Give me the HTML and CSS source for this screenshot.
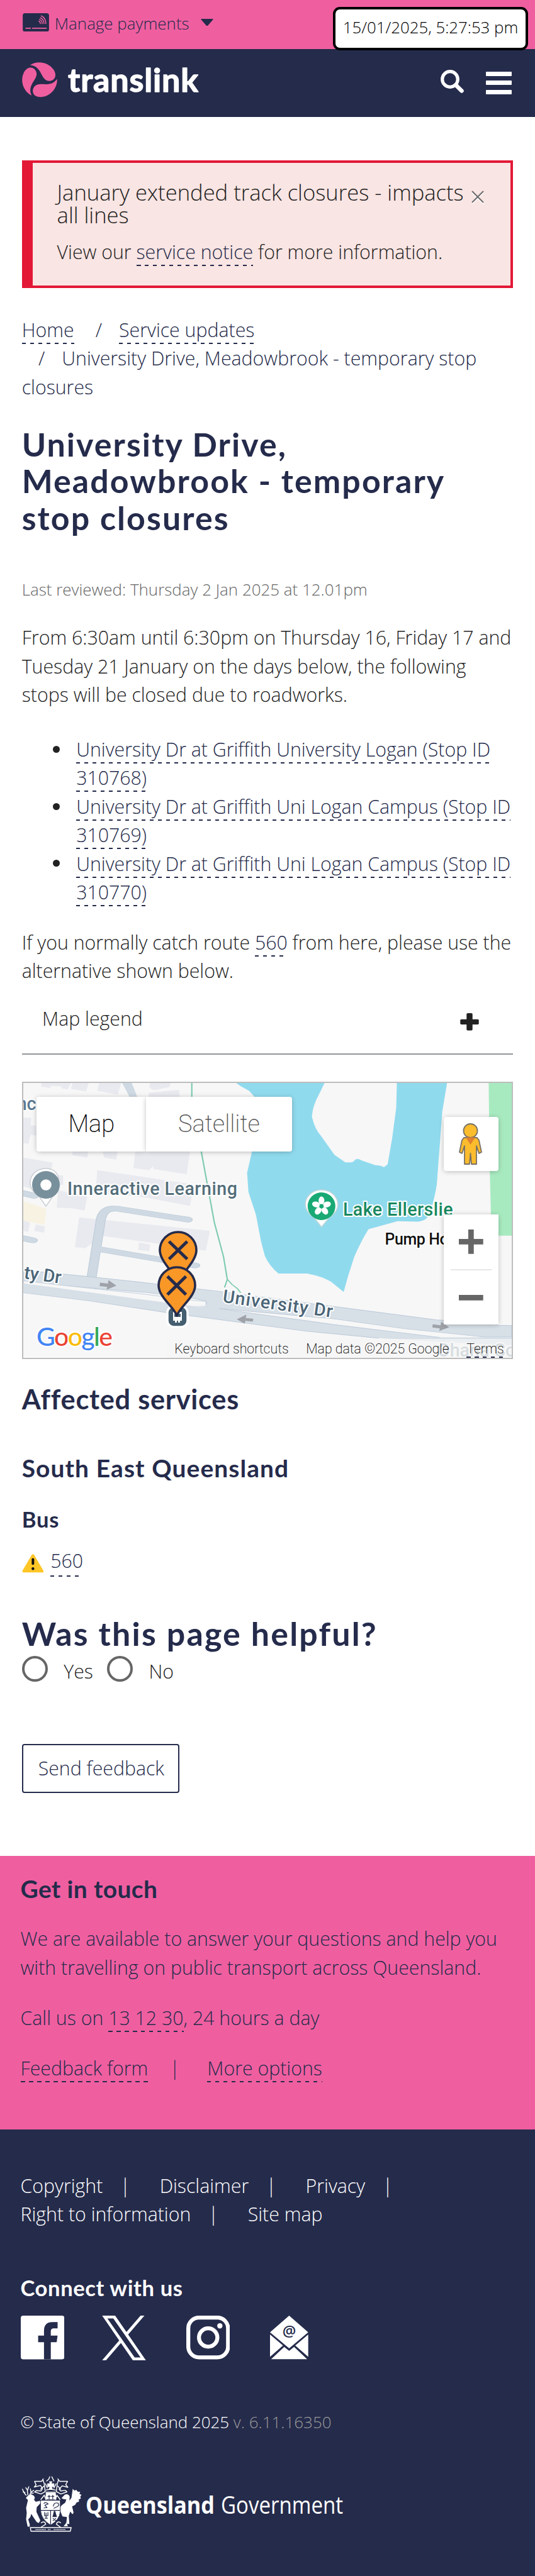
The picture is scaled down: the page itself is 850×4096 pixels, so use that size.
FILE: index.html
```html
<!DOCTYPE html>
<html lang="en">
<head>
<meta charset="utf-8">
<title>University Drive, Meadowbrook - temporary stop closures | Translink</title>
<link rel="stylesheet" href="styles.css">
</head>
<body>
<div class="topbar">
  <svg class="card-icon" viewBox="0 0 174 122"><rect width="174" height="122" rx="15" fill="#252b4b"/><g fill="none" stroke="#ef5fa0" stroke-width="6.5" stroke-linecap="round"><path d="M21 99.500H51M64 99.500H156"/><path d="M122 18Q153 31 153 69M117 30Q141 41 141 69M111 41Q129 49 129 69M107 52Q116 56 117 69"/></g></svg>
  <span class="topbar-label">Manage payments</span>
  <svg class="caret" viewBox="0 0 20 12"><path d="M0 0H20V1L10.500 12H9.500L0 1Z" fill="#252b4b"/></svg>
</div>
<div class="timestamp">15/01/2025, 5:27:53 pm</div>
<header class="header">
  <svg class="logo" viewBox="0 0 290 57">
    <g transform="translate(-12.980 -84.110) scale(.2403)" fill="#ef5fa0">
      <path d="M107 369C150 338 225 345 262 398C290 440 268 473 235 474C175 474 190 375 107 369Z"/>
      <path d="M107 369C150 338 225 345 262 398C290 440 268 473 235 474C175 474 190 375 107 369Z" transform="rotate(120 170 466)"/>
      <path d="M107 369C150 338 225 345 262 398C290 440 268 473 235 474C175 474 190 375 107 369Z" transform="rotate(240 170 466)"/>
    </g>
    <text class="wordmark" x="73" y="47.300" textLength="207">translink</text>
  </svg>
  <div class="header-actions">
    <svg class="search-icon" viewBox="0 0 37 37" fill="none" stroke="#fff" stroke-linecap="round"><circle cx="15" cy="15" r="12.300" stroke-width="5.200"/><path d="M25 25L33.500 33.500" stroke-width="6.500"/></svg>
    <div class="burger"><i></i><i></i><i></i></div>
  </div>
</header>
<main class="main">
  <section class="alert">
    <h2>January extended track closures - impacts all lines</h2>
    <p>View our <a>service notice</a> for more information.</p>
    <svg class="alert-close" viewBox="0 0 20 22" fill="none"><path d="M1 3L19 21M19 3L1 21" stroke="#fff" stroke-width="2"/><path d="M1 1L19 19M19 1L1 19" stroke="#6d6a6c" stroke-width="2"/></svg>
  </section>
  <ol class="crumbs">
    <li><a>Home</a></li>
    <li><a>Service updates</a></li>
    <li>University Drive, Meadowbrook - temporary stop closures</li>
  </ol>
  <h1>University Drive, Meadowbrook - temporary stop closures</h1>
  <p class="reviewed">Last reviewed: Thursday 2 Jan 2025 at 12.01pm</p>
  <p class="intro">From 6:30am until 6:30pm on Thursday 16, Friday 17 and Tuesday 21 January on the days below, the following stops will be closed due to roadworks.</p>
  <ul class="stops">
    <li><a>University Dr at Griffith University Logan (Stop ID 310768)</a></li>
    <li><a>University Dr at Griffith Uni Logan Campus (Stop ID 310769)</a></li>
    <li><a>University Dr at Griffith Uni Logan Campus (Stop ID 310770)</a></li>
  </ul>
  <p class="routes">If you normally catch route <a>560</a> from here, please use the alternative shown below.</p>
  <div class="legend"><span>Map legend</span><svg viewBox="0 0 30 28" fill="#222"><rect x="10.200" width="9.600" height="28" rx="1.800"/><rect y="9.800" width="30" height="8.600" rx="1.800"/></svg></div>
  <div class="map">
    <svg class="map-canvas" viewBox="0 0 776 436">
      <rect width="776" height="436" fill="#f7f7f7"/>
      <g transform="translate(-36.900 -20.900) scale(.5421 .3035)">
        <g fill="#e9eaf0">
          <path d="M122 69H208L198 103L180 98V88L150 84L148 94L120 88ZM212 69H260L252 113L208 100ZM290 69H355L345 130L285 110ZM440 69H500L497 90L450 107L437 92ZM436 120L525 105L527 160H433Z"/>
          <path d="M68 250L92 252L90 290L106 294V345L90 340L83 388L68 384ZM68 460L154 486L148 545L185 555V600L120 640L68 610ZM213 425L258 428L256 460L211 446ZM300 425L345 428L340 470L305 460ZM396 425H557L547 547L450 520L448 505L437 525L391 515Z"/>
          <path d="M285 525L566 600L557 713L430 670L280 640ZM170 630L255 665L248 738L210 725L166 722ZM232 773L615 843L603 948L535 930L440 905L300 870L250 935L219 930ZM68 785L88 800L82 850L68 843ZM105 810L132 820L129 853L100 845ZM407 905L440 915L437 950L405 944Z"/>
        </g>
        <path d="M68 690L136 728L130 812L68 790Z" fill="#f8f2e2"/>
        <path d="M358 69H386L404 150H382Z" fill="#ced9e3"/>
        <g fill="none" stroke-linecap="round">
          <path d="M268 1090L294 800C297 740 315 722 345 728L550 785M292 940L572 1025M40 872L96 893M40 635L100 660" stroke="#bccad8" stroke-width="29"/>
          <path d="M268 1090L294 800C297 740 315 722 345 728L550 785M292 940L572 1025M40 872L96 893M40 635L100 660" stroke="#ced9e3" stroke-width="25"/>
        </g>
        <path d="M68 1050L253 1082L400 1110L640 1160L980 1240L1280 1310L1440 1325L1460 1338L1500 1340V1400H1420L1180 1355L980 1305L640 1250L560 1230L590 1238L604 1238L606 1212L560 1195L420 1165L180 1130L68 1118Z" fill="#d7dfe7" stroke="#bccad8" stroke-width="3"/>
        <path d="M68 1105L180 1128L420 1175L570 1208L604 1213V1239L560 1238L420 1208L68 1130Z" fill="#f7f7f7" stroke="#c4d0dc" stroke-width="3"/>
        <path d="M68 1118L560 1238L645 1252L980 1335L1290 1402H1500V1446L1110 1406L900 1370L500 1275L260 1210L68 1168Z" fill="#d7dfe7"/>
        <path d="M68 1168L260 1210L500 1275L900 1370L1110 1406M645 1252L980 1335L1290 1402" fill="none" stroke="#bccad8" stroke-width="3"/>
        <path d="M600 1170H660L640 1255H590L606 1225Z" fill="#d7dfe7"/>
        <path d="M562 69V180L592 450L628 800L655 980L666 1098L658 1140M666 1098L680 1125L695 1145L705 1168" fill="none" stroke="#7ecbb0" stroke-width="4"/>
        <path d="M692 69H1310L1296 220L1280 600Q1275 660 1262 740Q1255 790 1225 795L1165 793L1080 835Q1060 890 1038 980L1020 1080L1007 1164L970 1110Q940 1080 900 1067H816Q790 1030 776 975L765 900L750 760L728 640L724 540L738 430L760 260L745 140L730 110L705 85Z" fill="#90daee"/>
        <path d="M951 69H1163L1161 200L1149 360L1136 495L1125 510Q1115 500 1100 500L1060 475Q1048 460 1040 472Q1035 487 1025 485H1012L980 445L940 345Q922 310 914 245Q916 190 933 135Z" fill="#f7f7f7"/>
        <path d="M1432 69H1500V869H1440L1435 500Z" fill="#a8eac0"/>
        <g fill="#9fa2a9"><path d="M293 1115L316 1120L318 1102L341 1131L312 1152L314 1137L292 1133ZM742 1304L720 1300L722 1282L694 1307L717 1330L719 1315L741 1319ZM1268 1333L1291 1338L1293 1320L1316 1349L1287 1368L1289 1355L1267 1350Z"/></g>
      </g>
      <g class="poi-pins">
        <path d="M36 196L25 180C0 165 11 136 36 136S61 165 47 180Z" fill="#fff" stroke="#c9ced4" stroke-width="1.500"/>
        <circle cx="36" cy="162" r="22" fill="#78909c"/><circle cx="36" cy="162" r="8.800" fill="#fff"/>
        <path d="M473.800 229L462 214C437 199 449 170 473.800 170S511 199 486 214Z" fill="#fff" stroke="#c2d5d8" stroke-width="1.500"/>
        <circle cx="473.800" cy="196" r="22" fill="#18a974"/>
        <g fill="#fff"><ellipse cx="473.800" cy="187" rx="4.600" ry="6.500"/><ellipse cx="473.800" cy="187" rx="4.600" ry="6.500" transform="rotate(72 473.800 196)"/><ellipse cx="473.800" cy="187" rx="4.600" ry="6.500" transform="rotate(144 473.800 196)"/><ellipse cx="473.800" cy="187" rx="4.600" ry="6.500" transform="rotate(216 473.800 196)"/><ellipse cx="473.800" cy="187" rx="4.600" ry="6.500" transform="rotate(288 473.800 196)"/></g>
        <circle cx="473.800" cy="196" r="3.400" fill="#18a974"/>
      </g>
      <g class="map-label">
        <text x="69.900" y="177.900" textLength="270" fill="#546e7a">Inneractive Learning</text>
        <text x="507.900" y="211.300" textLength="174.600" fill="#188860">Lake Ellerslie</text>
        <text class="minor" x="574.600" y="256.500" textLength="101" fill="#111">Pump Ho</text>
        <text transform="translate(316 348.500) rotate(8)" textLength="176" fill="#4b6577">University Dr</text>
        <text transform="translate(59 319) rotate(8)" text-anchor="end" fill="#4b6577">ty Dr</text>
        <text x="20.500" y="42.800" text-anchor="end" fill="#5b7893">nc</text>
        <text x="658" y="435" fill="#8fa3ae">Ohana Co</text>
      </g>
      <g>
        <rect x="229" y="355" width="32" height="33" rx="10" fill="#455f70" stroke="#fff" stroke-width="3.500"/>
        <path d="M238 364H252V378H249V381H246V378H244V381H241V378H238Z" fill="#fff"/><path d="M240 367H250V372H240Z" fill="#455f70"/>
        <g fill="#f99727" stroke="#252b4b" stroke-width="3.600" stroke-linejoin="round">
          <path d="M246 318C242 304 217 284 217 266A29 29 0 0 1 275 266C275 284 250 304 246 318Z"/><path d="M231.500 252L260.500 280M260.500 252L231.500 280" stroke-width="5"/>
          <path d="M244 370C240 357 215 340 215 322A29 29 0 0 1 273 322C273 340 248 357 244 370Z"/><path d="M229 307.500L258.500 336.500M258.500 307.500L229 336.500" stroke-width="5"/>
        </g>
      </g>
      <text class="google" x="21" y="417.500" textLength="121"><tspan fill="#4285f4">G</tspan><tspan fill="#ea4335">o</tspan><tspan fill="#fbbc05">o</tspan><tspan fill="#4285f4">g</tspan><tspan fill="#34a853">l</tspan><tspan fill="#ea4335">e</tspan></text>
    </svg>
    <div class="map-type"><span class="active">Map</span><span>Satellite</span></div>
    <div class="pegman"><svg viewBox="0 0 37 66"><g fill="#fbbc2d" stroke="#777065" stroke-width="1.800" stroke-linejoin="round"><path d="M8 23H29L32 27L36 46L32 48L28 36V65H20L18.500 48L17 65H9V36L5 48L1 46L5 27Z"/><circle cx="18.500" cy="12" r="11"/></g><path d="M11 22.500H26L18.500 34Z" fill="#e08030"/></svg></div>
    <div class="zoomer"><svg viewBox="0 0 38 38"><path d="M0 14.700H14.700V0H23.300V14.700H38V23.300H23.300V38H14.700V23.300H0Z" fill="#666"/></svg><hr><svg viewBox="0 0 38 38"><path d="M0 14.700H38V23.300H0Z" fill="#666"/></svg></div>
    <div class="attribution"><span>Keyboard shortcuts</span><span>Map data ©2025 Google</span><a>Terms</a></div>
  </div>
  <h3 class="affected">Affected services</h3>
  <h4 class="region">South East Queensland</h4>
  <h5 class="mode">Bus</h5>
  <p class="service"><svg viewBox="0 0 35 30"><path d="M15.500 1.500Q17.500 -1 19.500 1.500L34.500 27Q35 29.500 33 29.500H2Q0 29.500 .5 27Z" fill="#ffc627"/><path d="M17.500 8.500V15.500" stroke="#111" stroke-width="4" stroke-linecap="round"/><circle cx="17.500" cy="23.500" r="2.200" fill="#111"/></svg><a>560</a></p>
  <h2 class="helpful">Was this page helpful?</h2>
  <div class="choices"><label><i></i><span>Yes</span></label><label><i></i><span>No</span></label></div>
  <button class="send">Send feedback</button>
</main>
<section class="contact">
  <h4>Get in touch</h4>
  <p>We are available to answer your questions and help you with travelling on public transport across Queensland.</p>
  <p>Call us on <a>13 12 30</a>, 24 hours a day</p>
  <p class="contact-links"><a>Feedback form</a><span>|</span><a>More options</a></p>
</section>
<footer class="footer">
  <div class="footer-links"><span>Copyright</span><span>Disclaimer</span><span>Privacy</span><span>Right to information</span><span>Site map</span></div>
  <h5>Connect with us</h5>
  <div class="social">
    <svg class="fb" viewBox="0 0 69.500 69.500"><rect width="69.500" height="69.500" rx="4" fill="#fff"/><path d="M36.900 69.500V42.300H27.600V31.700H36.900V24C36.900 14.500 42 10.300 50 10.300H58.500V20.200H53C49 20.200 47.700 22 47.700 25V31.700H58.500L57 42.300H47.700V69.500Z" fill="#252b4b"/></svg>
    <svg class="x" viewBox="0 0 1200 1227"><path d="M714.163 519.284L1160.890 0H1055.030L667.137 450.887L357.328 0H0L468.492 681.821L0 1226.370H105.866L515.491 750.218L842.672 1226.370H1200L714.137 519.284ZM569.165 687.828L521.697 619.934L144.011 79.694H306.615L611.412 515.685L658.880 583.579L1055.080 1150.300H892.476L569.165 687.854Z" fill="#fff"/></svg>
    <svg class="ig" viewBox="0 0 69.500 69.500" fill="none" stroke="#fff" stroke-width="6.300"><rect x="3.150" y="3.150" width="63.200" height="63.200" rx="17"/><circle cx="34.750" cy="34.750" r="14.600"/><circle cx="53.300" cy="16.200" r="4.200" fill="#fff" stroke="none"/></svg>
    <svg class="mail" viewBox="0 0 60.700 69.500" fill="#fff"><path d="M30.400 0L60.700 26.400L30.400 52L0 26.400ZM0 30L20.600 47.600L0 65.600ZM60.700 30L40.100 47.600L60.700 65.600ZM1.800 69.300L22.500 49.800L30.400 55.900L38.300 49.800L59 69.300Z"/><text x="30.400" y="33" text-anchor="middle">@</text></svg>
  </div>
  <p class="copyright">© State of Queensland 2025 <span>v. 6.11.16350</span></p>
  <svg class="gov" viewBox="0 0 520 89">
    <g transform="translate(-6 -7.900) scale(.2403)" stroke-linejoin="round" stroke-linecap="round">
      <g fill="none" stroke="#fff" stroke-width="6">
        <path d="M52 160L40 146L28 120M44 142L32 138M64 158L60 130L70 104M62 128L50 110M76 158L84 140L102 128M84 140L80 118M82 146L100 146"/>
        <path d="M165 52L155 68L108 68L118 92L106 106L148 96L160 118L150 132L118 130L108 138L150 152L178 136L172 84L164 60M262 52L274 68L326 68L314 90L328 108L290 98L270 120L280 132L312 128L322 138L282 152L252 136L258 84L266 60"/>
        <path d="M188 66L202 54L208 38M236 66L230 54L222 38M180 84L192 112M250 84L236 112M150 188L172 160L184 190M276 188L256 160L244 190M148 120L170 100M280 120L262 100"/>
        <path d="M184 140H246M184 126Q214 116 246 126"/>
        <path d="M84 374H346M80 374L84 398H344L350 374M150 372L182 352Q176 328 152 342M280 372L252 352Q258 328 280 342"/>
        <path d="M116 387H180M198 387H218M236 387H314" stroke-width="5" stroke-dasharray="4 6"/>
      </g>
      <g fill="#fff">
        <path d="M204 68H226L220 82H238V106H222L228 120H202L208 106H192V82H208Z"/>
        <path d="M182 144H248L252 188H180Z"/>
        <path d="M50 178L66 162L84 152L104 164L110 178L104 190L116 204L146 196L152 208L134 226L122 240L120 270L146 326L136 344L122 338L98 302L86 284L80 304L66 320L76 352V368H62L52 320L56 276L52 244L64 192Z"/>
        <path d="M360 118L372 130L384 124L392 136L410 138L404 150L418 158L410 170L414 182L400 188L402 202L386 208L376 224L356 234L366 276L358 286L344 268L334 296L338 350H322L328 366H300L318 342L322 304L292 300L278 264L276 240L290 224L310 210L318 188L300 186L286 180L306 158Q328 146 340 168L338 196L352 176Z"/>
        <path d="M148 194H278V264Q276 322 214 358Q152 322 148 264Z" stroke="#252b4b" stroke-width="4"/>
      </g>
      <g fill="none" stroke="#252b4b" stroke-width="5">
        <path d="M150 260H276M214 260V354M204 160V184M196 168H212M228 160V184M220 168H236"/><path d="M170 214Q182 202 198 218L176 226L190 242L170 244M232 232Q236 206 262 212Q276 224 258 236L236 246M184 278V310M174 274V296H196V274M176 312H194M230 314L248 328M248 314L230 328"/>
      </g>
      <path d="M236 264H244L256 304H226Z" fill="#252b4b"/>
    </g>
    <text class="gov-b" x="101" y="60" textLength="205" lengthAdjust="spacingAndGlyphs">Queensland</text>
    <text class="gov-r" x="316" y="60" textLength="194" lengthAdjust="spacingAndGlyphs">Government</text>
  </svg>
</footer>
</body>
</html>
```
FILE: styles.css
```css
* { box-sizing: border-box; }
body { margin: 0; width: 850px; background: #fff; color: #222; font: 300 30.28px/45.42px "Open Sans", sans-serif; }
h1, h2, h3, h4, h5, p, ul, ol { margin: 0; padding: 0; }
svg { display: block; flex: none; }
h1, h3, h4, h5, .helpful { font-family: Lato, sans-serif; font-weight: 700; color: #252b4b; }
a {
  color: #252b4b; padding-bottom: 2px;
  background: repeating-linear-gradient(90deg, #252b4b 0 6.500px, transparent 6.500px 13px) left bottom / 100% 2px no-repeat;
  -webkit-box-decoration-break: clone; box-decoration-break: clone;
}

.topbar { height: 78px; padding: 17.700px 34.700px 0; display: flex; align-items: flex-start; background: #ef5fa0; color: #252b4b; font-size: 25.950px; line-height: 38.900px; }
.card-icon { width: 42px; height: 29.300px; margin: 3.300px 9px 0 1px; }
.caret { width: 20px; height: 11.500px; margin: 12px 0 0 18px; }
.timestamp { position: absolute; left: 529px; top: 11px; width: 310px; height: 69px; padding-top: 9px; border: 4.300px solid #000; border-radius: 11px; background: #fff; color: #000; font-size: 25.800px; line-height: 38.900px; text-align: center; white-space: nowrap; }
.header { height: 108.300px; padding: 20.600px 36.700px 0 34.700px; display: flex; justify-content: space-between; background: #252b4b; }
.logo { width: 290px; height: 57px; overflow: visible; }
.wordmark { font: 700 52px Lato, sans-serif; fill: #fff; stroke: #fff; stroke-width: 1.300px; stroke-linejoin: round; }
.header-actions { display: flex; gap: 35px; padding-top: 12.300px; }
.search-icon { width: 37px; height: 37px; }
.burger { width: 41.500px; display: flex; flex-direction: column; gap: 7.800px; padding-top: 2.700px; }
.burger i { height: 7px; border-radius: 1px; background: #fff; }

.main { padding: 69px 34.700px 99.300px; }
.alert { position: relative; height: 203px; padding: 28.500px 60px 0 38.900px; border: 4.330px solid #e31836; border-left-width: 17.300px; background: #f9e5e3; }
.alert h2 { font-size: 34.600px; line-height: 36.500px; font-weight: 300; margin-bottom: 17.400px; }
.alert-close { position: absolute; left: 697px; top: 43.500px; width: 20px; height: 22px; }
.crumbs { margin-top: 43.500px; list-style: none; color: #252b4b; }
.crumbs li { display: inline-block; }
.crumbs li + li::before { content: "/"; margin: 0 27px 0 26.300px; }
h1 { margin-top: 38.600px; font-size: 51.900px; line-height: 58.600px; letter-spacing: 2.100px; }
.reviewed { margin-top: 65.400px; font-size: 25.950px; line-height: 38.900px; color: #666; }
.intro { margin-top: 34.400px; }
.stops { margin: 41.600px 0 34.500px; padding-left: 86.500px; list-style: none; }
.stops li { position: relative; }
.stops li::before { content: ""; position: absolute; left: -37px; top: 16.700px; width: 11px; height: 11px; border-radius: 50%; background: #222; }
.legend { margin-top: 30px; height: 80.200px; padding: 0 54.500px 0 32.400px; display: flex; justify-content: space-between; border-bottom: 2.160px solid #939598; }
.legend svg { width: 30px; height: 27.500px; margin-top: 14.500px; }

.map { position: relative; margin-top: 43.400px; height: 440.400px; border: 2.160px solid #bdbdbd; overflow: hidden; }
.map-canvas { width: 776px; height: 436px; }
.map-label { font: 500 28.600px Roboto, sans-serif; stroke: #fff; stroke-width: 4px; stroke-linejoin: round; paint-order: stroke; }
.map-label .minor { font-size: 25px; }
.google { font: 500 41px Lato, sans-serif; stroke: #fff; stroke-width: 4px; paint-order: stroke; }
.map-type { position: absolute; left: 21.600px; top: 21.600px; display: flex; height: 86.500px; font: 200 38px/86px Roboto, sans-serif; color: #565656; text-align: center; }
.map-type span { width: 231.400px; background: #fff; border-radius: 0 4px 4px 0; box-shadow: 0 1px 8px -1px rgba(0,0,0,.3); }
.map-type .active { width: 174px; color: #000; border-radius: 4px 0 0 4px; }
.pegman, .zoomer { position: absolute; left: 668.400px; width: 86.500px; background: #fff; border-radius: 4px; box-shadow: 0 1px 8px -1px rgba(0,0,0,.3); }
.pegman { top: 53.500px; height: 86.500px; padding: 10.500px 24px; }
.pegman svg { width: 37px; height: 66px; }
.zoomer { top: 209px; height: 175px; padding: 24px 0; border-radius: 0; display: flex; flex-direction: column; align-items: center; justify-content: space-between; }
.zoomer svg { width: 38.700px; height: 38.700px; }
.zoomer hr { width: 65px; height: 2px; margin: 0; border: 0; background: #e6e6e6; }
.attribution { position: absolute; right: 0; bottom: 0; width: 549px; height: 30px; padding-left: 13px; display: flex; gap: 27.700px; background: rgba(245,245,245,.7); font: 200 21.300px/32px Roboto, sans-serif; color: #000; white-space: nowrap; }
.attribution a { color: #000; height: 30px; }

.affected { margin-top: 37.200px; font-size: 43.300px; line-height: 52px; letter-spacing: .75px; }
.region { margin-top: 60.600px; font-size: 38.900px; line-height: 46px; letter-spacing: 1.100px; }
.mode { margin-top: 38px; font-size: 34.600px; line-height: 42px; letter-spacing: .8px; }
.service { margin-top: 22.800px; display: flex; gap: 10.800px; }
.service svg { width: 34.700px; height: 29.700px; margin-top: 11.500px; }
.helpful { margin-top: 60.700px; font-size: 51.900px; line-height: 58.600px; letter-spacing: 2.200px; }
.choices { margin-top: 6.800px; display: flex; gap: 22px; }
.choices label { display: flex; }
.choices i { width: 41px; height: 41px; margin-right: 25.500px; border: 4.300px solid #666; border-radius: 50%; }
.choices span { padding-top: 2.300px; }
.send { display: block; margin-top: 91.900px; margin-bottom: 1px; height: 78px; padding: 0 24px; width: 250px; border: 2.160px solid #252b4b; border-radius: 4px; background: #fff; color: #252b4b; font: inherit; white-space: nowrap; }

.contact { height: 434.900px; padding: 28.700px 32.500px 0; background: #ef5fa0; color: #252b4b; }
.contact h4 { font-size: 38.900px; line-height: 46px; letter-spacing: .4px; }
.contact p { margin-top: 34.800px; }
.contact-links span { display: inline-block; width: 17px; margin: 0 43px 0 34px; text-align: center; }
.footer { height: 712.300px; padding: 67.300px 32.500px 0; background: #252b4b; color: #fff; }
.footer-links { display: flex; flex-wrap: wrap; }
.footer-links span:not(:last-child)::after { content: "|"; margin: 0 46.500px 0 27.500px; }
.footer h5 { margin-top: 73.200px; font-size: 34.600px; line-height: 42px; letter-spacing: .6px; color: #fff; }
.social { margin-top: 22.500px; height: 71px; display: flex; align-items: center; }
.fb, .ig { width: 69.500px; height: 69.500px; }
.x { width: 70px; height: 71px; margin: 0 63.500px 0 60px; }
.mail { width: 60.700px; height: 69.500px; margin-left: 64px; }
.mail text { font: 600 24px "Open Sans", sans-serif; fill: #252b4b; }
.copyright { margin-top: 79.600px; font-size: 25.950px; line-height: 38.900px; }
.copyright span { color: #999; }
.gov { width: 520px; height: 89px; margin: 65.600px 0 0 2px; }
.gov-b { font: 700 38px "Open Sans", sans-serif; fill: #fff; }
.gov-r { font: 400 38px "Open Sans", sans-serif; fill: #fff; }
```
